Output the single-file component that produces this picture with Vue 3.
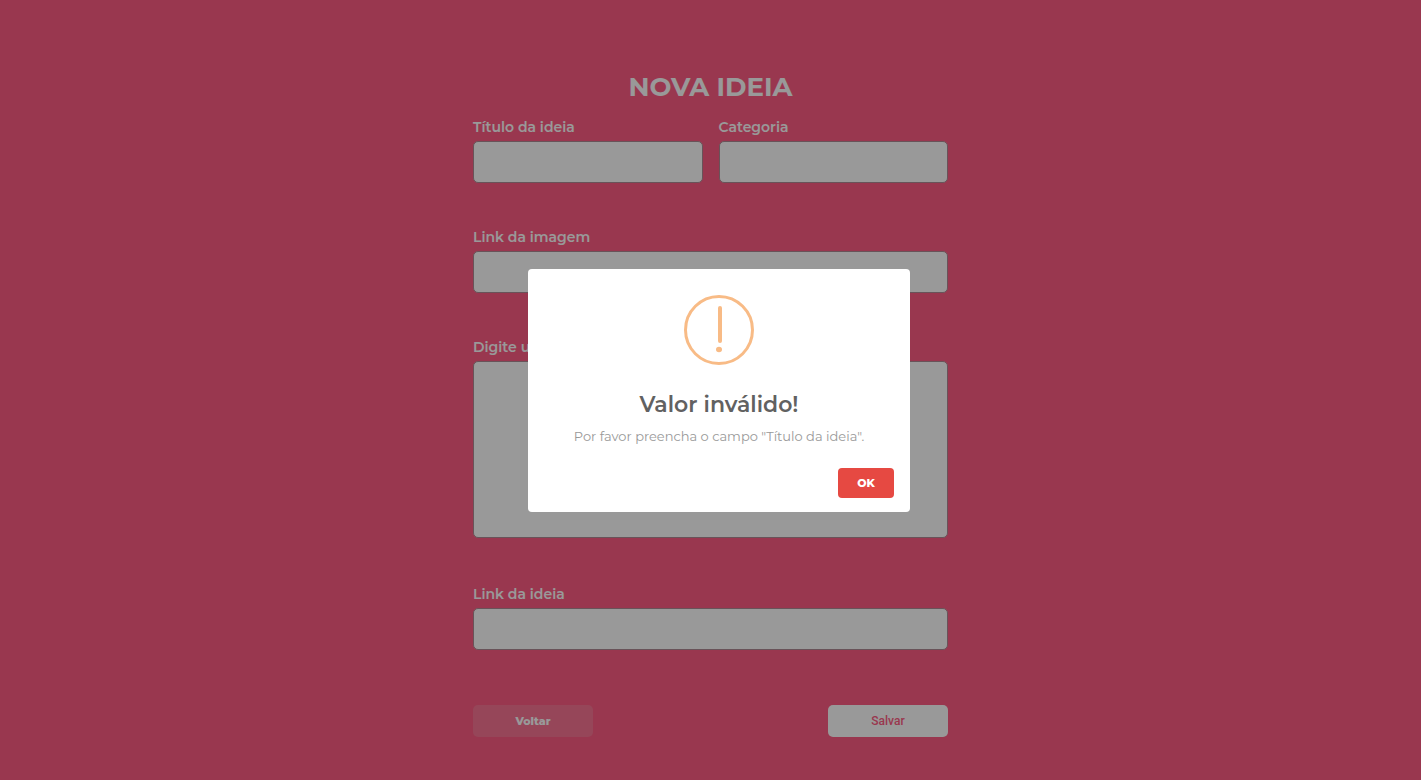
<script setup>
import { reactive, ref } from 'vue'

const idea = reactive({ title: '', category: '', image: '', description: '', link: '' })
const alertOpen = ref(true)
</script>

<template>
  <main class="page">
    <form class="form" @submit.prevent="alertOpen = true">
      <h1 class="title">NOVA IDEIA</h1>
      <div class="row">
        <div class="field">
          <label for="title">Título da ideia</label>
          <input id="title" v-model="idea.title" type="text" />
        </div>
        <div class="field">
          <label for="category">Categoria</label>
          <input id="category" v-model="idea.category" type="text" />
        </div>
      </div>
      <div class="field">
        <label for="image">Link da imagem</label>
        <input id="image" v-model="idea.image" type="text" />
      </div>
      <div class="field field-long">
        <label for="description">Digite uma descrição</label>
        <textarea id="description" v-model="idea.description"></textarea>
      </div>
      <div class="field">
        <label for="link">Link da ideia</label>
        <input id="link" v-model="idea.link" type="text" />
      </div>
      <div class="actions">
        <button class="btn back" type="button">Voltar</button>
        <button class="btn save" type="submit">Salvar</button>
      </div>
    </form>
  </main>

  <div v-if="alertOpen" class="overlay">
    <section class="modal" role="alertdialog" aria-labelledby="alert-title" aria-describedby="alert-text">
      <svg class="icon" viewBox="0 0 70 70" aria-hidden="true">
        <circle cx="35" cy="35" r="33.5" fill="none" stroke="#f8bb86" stroke-width="3" />
        <rect x="34" y="11" width="4" height="37" rx="2" fill="#f8bb86" />
        <ellipse cx="35" cy="54.5" rx="3" ry="2.7" fill="#f8bb86" />
      </svg>
      <h2 id="alert-title" class="alert-title">Valor inválido!</h2>
      <p id="alert-text" class="alert-text">Por favor preencha o campo "Título da ideia".</p>
      <div class="alert-footer">
        <button class="ok" type="button" @click="alertOpen = false">OK</button>
      </div>
    </section>
  </div>
</template>

<style>
body {
  background: #ff5d84;
}
</style>

<style scoped>
.page,
.overlay {
  font-family: Montserrat, Inter, "Open Sans", sans-serif;
}
.page {
  box-sizing: border-box;
  min-height: 100vh;
  padding: 68px 16px 43px;
  color: #fff;
}
.form {
  display: flex;
  flex-direction: column;
  max-width: 475px;
  margin: 0 auto;
}
.title {
  margin: 0 0 11px;
  font-size: 26px;
  line-height: 38px;
  font-weight: 700;
  text-align: center;
}
.row {
  display: grid;
  grid-template-columns: 1fr 1fr;
  gap: 16px;
}
.field {
  display: flex;
  flex-direction: column;
  gap: 4px;
  margin-bottom: 44px;
}
.field-long {
  margin-bottom: 46px;
}
label {
  font-size: 14px;
  line-height: 20px;
  font-weight: 600;
}
input,
textarea {
  box-sizing: border-box;
  width: 100%;
  height: 42px;
  margin: 0;
  padding: 8px 12px;
  border: 1px solid #b08a94;
  border-radius: 5px;
  background: #fff;
  font: inherit;
  outline: none;
}
textarea {
  display: block;
  height: 177px;
  resize: none;
}
.actions {
  display: flex;
  justify-content: space-between;
  margin-top: 11px;
}
.btn {
  width: 120px;
  height: 32px;
  padding: 0;
  border: 0;
  border-radius: 5px;
  font-family: inherit;
  font-size: 11px;
  font-weight: 800;
}
.back {
  background: #fa7695;
  color: #fff;
}
.save {
  background: #fff;
  color: #ff5d84;
  font-family: Roboto, sans-serif;
  font-size: 12px;
  font-weight: 500;
}
.overlay {
  position: fixed;
  inset: 0;
  display: flex;
  align-items: center;
  justify-content: center;
  padding-left: 17px;
  background: rgba(0, 0, 0, 0.4);
}
.modal {
  display: flex;
  flex-direction: column;
  box-sizing: border-box;
  width: 382px;
  padding: 26px 16px 14px;
  border-radius: 4px;
  background: #fff;
  text-align: center;
}
.icon {
  width: 70px;
  height: 70px;
  margin: 0 auto 25px;
}
.alert-title {
  margin: 0;
  color: #616161;
  font-size: 22px;
  line-height: 30px;
  font-weight: 600;
}
.alert-text {
  margin: 7px 0 23px;
  color: #999;
  font-size: 13px;
  line-height: 18px;
}
.alert-footer {
  display: flex;
  justify-content: flex-end;
}
.ok {
  width: 56px;
  height: 30px;
  padding: 0;
  border: 0;
  border-radius: 4px;
  background: #e64942;
  color: #fff;
  font-family: inherit;
  font-size: 11px;
  font-weight: 800;
}
</style>
